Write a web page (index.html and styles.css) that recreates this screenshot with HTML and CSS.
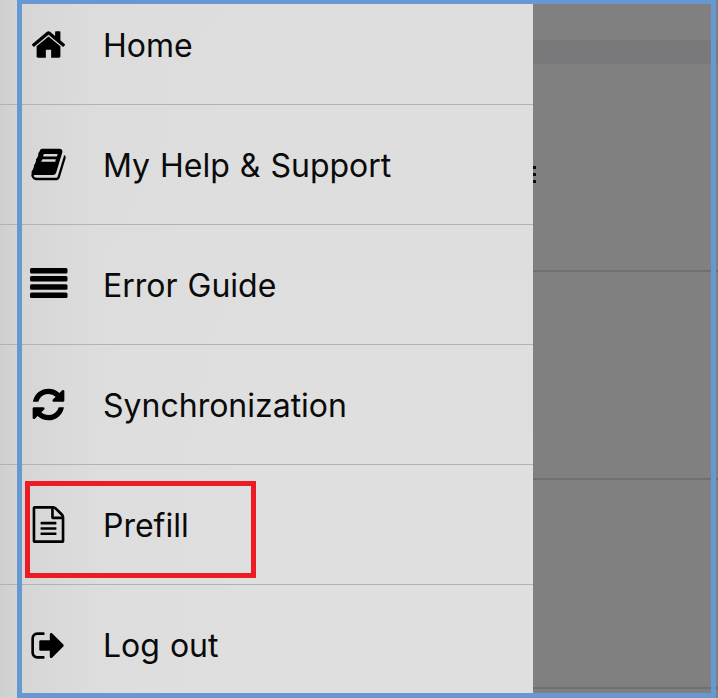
FILE: index.html
```html
<!DOCTYPE html>
<html lang="en">
<head>
<meta charset="utf-8">
<title>Menu</title>
<link rel="stylesheet" href="styles.css">
</head>
<body>
<div class="screen">
  <nav class="drawer">
    <a class="item">
      <svg class="icon" viewBox="0 0 1792 1792"><path d="M1472 992v480q0 26-19 45t-45 19h-384v-384h-256v384h-384q-26 0-45-19t-19-45v-480q0-1 .5-3t.5-3l575-474 575 474q1 2 1 6zm223-69l-62 74q-8 9-21 11h-3q-13 0-21-7l-692-577-692 577q-12 8-24 7-13-2-21-11l-62-74q-8-10-7-23.500t11-21.500l719-599q32-26 76-26t76 26l244 204v-195q0-14 9-23t23-9h192q14 0 23 9t9 23v408l219 182q10 8 11 21.500t-7 23.500z"/></svg>
      <span class="label">Home</span>
    </a>
    <a class="item">
      <svg class="icon" viewBox="0 0 1792 1792"><path d="M1703 478q40 57 18 129l-275 906q-19 64-76.500 107.500t-122.500 43.500h-923q-77 0-148.500-53.500t-99.500-131.500q-24-67-2-127 0-4 3-27t4-37q1-8-3-21.500t-3-19.500q2-11 8-21t16.500-23.500 16.500-23.500q23-38 45-91.500t30-91.500q3-10 .5-30t-.5-28q3-11 17-28t17-23q21-36 42-92t25-90q1-9-2.500-32t.5-28q4-13 22-30.500t22-22.500q19-26 42.500-84.500t27.500-96.500q1-8-3-25.500t-2-26.500q2-8 9-18t18-23 17-21q8-12 16.500-30.500t15-35 16-36 19.500-32 26.500-23.500 36-11.500 47.500 5.500l-1 3q38-9 51-9h761q74 0 114 56t18 130l-274 906q-36 119-71.500 153.500t-128.500 34.500h-869q-27 0-38 15-11 16-1 43 24 70 144 70h923q29 0 56-15.500t35-41.500l300-987q7-22 5-57 38 15 59 43zm-1064 2q-4 13 2 22.500t20 9.500h608q13 0 25.500-9.500t16.500-22.500l21-64q4-13-2-22.500t-20-9.500h-608q-13 0-25.500 9.500t-16.500 22.500zm-83 256q-4 13 2 22.500t20 9.500h608q13 0 25.500-9.500t16.500-22.500l21-64q4-13-2-22.500t-20-9.500h-608q-13 0-25.500 9.500t-16.500 22.500z"/></svg>
      <span class="label">My Help &amp; Support</span>
    </a>
    <a class="item">
      <svg class="icon" viewBox="0 0 37 37"><rect x="0" y="2" width="37.500" height="5.500" rx="1.500"/><rect x="0" y="10" width="37.500" height="5.500" rx="1.500"/><rect x="0" y="18.300" width="37.500" height="5.500" rx="1.500"/><rect x="0" y="26.500" width="37.500" height="5.500" rx="1.500"/></svg>
      <span class="label">Error Guide</span>
    </a>
    <a class="item">
      <svg class="icon" viewBox="0 0 1792 1792"><path d="M1639 1056q0 5-1 7-64 268-268 434.500t-478 166.500q-146 0-282.500-55t-243.500-157l-129 129q-19 19-45 19t-45-19-19-45v-448q0-26 19-45t45-19h448q26 0 45 19t19 45-19 45l-137 137q71 66 161 102t187 36q134 0 250-65t186-179q11-17 53-117 8-23 30-23h192q13 0 22.500 9.500t9.500 22.500zm25-800v448q0 26-19 45t-45 19h-448q-26 0-45-19t-19-45 19-45l138-138q-148-137-349-137-134 0-250 65t-186 179q-11 17-53 117-8 23-30 23h-199q-13 0-22.500-9.500t-9.500-22.500v-7q65-268 270-434.500t480-166.500q146 0 284 55.500t245 156.500l130-129q19-19 45-19t45 19 19 45z"/></svg>
      <span class="label">Synchronization</span>
    </a>
    <a class="item">
      <svg class="icon" viewBox="0 0 1792 1792"><path d="M1596 380q28 28 48 76t20 88v1152q0 40-28 68t-68 28h-1344q-40 0-68-28t-28-68v-1600q0-40 28-68t68-28h896q40 0 88 20t76 48zm-444-244v376h376q-10-29-22-41l-313-313q-12-12-41-22zm384 1528v-1024h-416q-40 0-68-28t-28-68v-416h-768v1536h1280zm-1024-864q0-14 9-23t23-9h704q14 0 23 9t9 23v64q0 14-9 23t-23 9h-704q-14 0-23-9t-9-23v-64zm736 224q14 0 23 9t9 23v64q0 14-9 23t-23 9h-704q-14 0-23-9t-9-23v-64q0-14 9-23t23-9h704zm0 256q14 0 23 9t9 23v64q0 14-9 23t-23 9h-704q-14 0-23-9t-9-23v-64q0-14 9-23t23-9h704z"/></svg>
      <span class="label">Prefill</span>
    </a>
    <a class="item">
      <svg class="icon" viewBox="0 0 1792 1792"><path d="M704 1440q0 4 1 20t.5 26.500-3 23.500-10 19.500-20.500 6.500h-320q-119 0-203.500-84.500t-84.500-203.500v-704q0-119 84.500-203.500t203.500-84.500h320q13 0 22.500 9.500t9.500 22.500q0 4 1 20t.5 26.500-3 23.500-10 19.500-20.500 6.500h-320q-66 0-113 47t-47 113v704q0 66 47 113t113 47h312l11.500 1 11.500 3 8 5.500 7 9 2 13.500zm928-544q0 26-19 45l-544 544q-19 19-45 19t-45-19-19-45v-288h-448q-26 0-45-19t-19-45v-384q0-26 19-45t45-19h448v-288q0-26 19-45t45-19 45 19l544 544q19 19 19 45z"/></svg>
      <span class="label">Log out</span>
    </a>
  </nav>
  <div class="dim">
    <div class="band"></div>
    <div class="dim-row dim-row-first">
      <div class="kebab"><i></i><i></i><i></i></div>
    </div>
    <div class="dim-row dim-row-second"></div>
    <div class="dim-row dim-row-third"></div>
  </div>
  <div class="frame"></div>
  <div class="highlight"></div>
</div>
</body>
</html>
```
FILE: styles.css
```css
* { box-sizing: border-box; }
html, body { margin: 0; padding: 0; }
body { width: 718px; height: 698px; overflow: hidden; background: #808080; }
.screen {
  position: relative;
  display: flex;
  width: 718px;
  height: 698px;
  overflow: hidden;
  font-family: Inter, "Liberation Sans", sans-serif;
  color: #0a0a0a;
}
.drawer {
  display: flex;
  flex-direction: column;
  flex: 0 0 533px;
  height: 713px;
  margin-top: -15px;
  background:
    linear-gradient(90deg, rgba(207, 207, 207, 1) 0, rgba(214, 214, 214, 1) 22px, rgba(220, 220, 220, .6) 100px, rgba(222, 222, 222, 0) 240px),
    linear-gradient(180deg, #dcdddc 0, #dfdfdf 460px);
}
.item {
  display: flex;
  align-items: center;
  gap: 36px;
  flex: 0 0 120px;
  padding: 0 0 0 30px;
  border-bottom: 1px solid #b2b2b2;
}
.item:last-child { border-bottom: 0; }
.icon { flex: 0 0 37px; width: 37px; height: 37px; fill: #000; overflow: visible; }
.label { padding-top: 2px; font-size: 32px; line-height: 36px; white-space: nowrap; word-spacing: 1px; }
.dim { flex: 1; display: flex; flex-direction: column; background: #808080; }
.band { flex: 0 0 24px; margin-top: 40px; background: #79797b; }
.dim-row { border-bottom: 2px solid #6f6f6f; }
.dim-row-first { flex: 0 0 208px; padding-top: 102px; }
.dim-row-second { flex: 0 0 208px; }
.dim-row-third { flex: 0 0 209px; }
.kebab { display: flex; flex-direction: column; gap: 4px; }
.kebab i { display: block; width: 3px; height: 3px; background: #0a0a0a; }
.frame {
  position: absolute;
  left: 17px;
  top: -1px;
  width: 699px;
  height: 699px;
  border: 5px solid #6699d1;
}
.highlight {
  position: absolute;
  left: 25px;
  top: 481px;
  width: 231px;
  height: 97px;
  border: 5px solid #ed1c24;
}
```
